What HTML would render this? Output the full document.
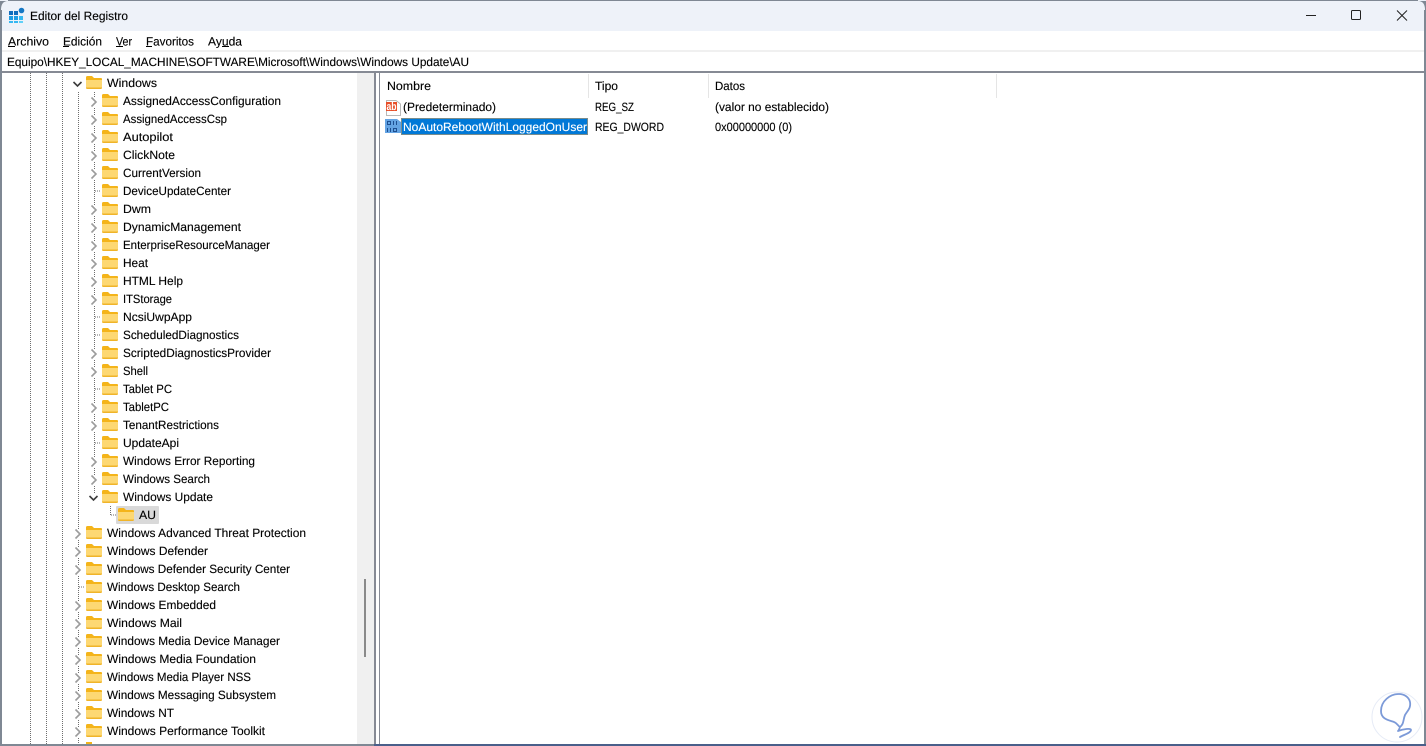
<!DOCTYPE html>
<html lang="es"><head><meta charset="utf-8"><title>Editor del Registro</title>
<style>
html,body{margin:0;padding:0;width:1426px;height:746px;overflow:hidden;background:#fff}
svg{display:block}
text{font-family:"Liberation Sans",Arial,sans-serif;font-size:12px;fill:#000;stroke:#000;stroke-width:.12}
</style></head><body>
<svg xmlns="http://www.w3.org/2000/svg" width="1426" height="746" viewBox="0 0 1426 746" text-rendering="geometricPrecision">
<defs>
<g id="f"><path d="M0 2.500Q0 1 1.500 1H6L8 3H15Q16 3 16 4V5H0Z" fill="#f4b41a"/><path d="M0 5H16V12.500Q16 14 14.500 14H1.500Q0 14 0 12.500Z" fill="#fdd873"/><path d="M0 12.500H16Q16 14 14.500 14H1.500Q0 14 0 12.500Z" fill="#f0b429"/></g>
<g id="c"><rect x="-5" y="-4" width="10" height="10" fill="#fff"/><path d="M-2.500-3.500 2 1-2.500 5.500" fill="none" stroke="#9c9c9c" stroke-width="1.600"/></g>
<g id="d"><rect x="-5" y="-4" width="10" height="10" fill="#fff"/><path d="M-4.500-1-.5 3 3.500-1" fill="none" stroke="#3c3c3c" stroke-width="1.600"/></g>
</defs>
<rect width="1426" height="746" fill="#fff"/>
<!-- title bar -->
<rect x="0" y="0" width="1426" height="31" fill="#eef2f9"/>
<path d="M0 10V1H8Q1 1 1 10ZM1426 10V1H1418Q1425 1 1425 10Z" fill="#7f8894"/>
<rect x="8" y="0" width="1410" height="1" fill="#7f8894"/>
<rect x="0" y="10" width="2" height="736" fill="#7f8894"/>
<rect x="1424" y="10" width="2" height="736" fill="#7f8894"/>
<!-- app icon -->
<g fill="#1e9ce3"><rect x="9" y="11" width="4" height="4" fill="#0f6cbd"/><rect x="14" y="11" width="4" height="4" fill="#0f6cbd"/><rect x="9" y="16" width="4" height="4"/><rect x="14" y="16" width="4" height="4"/><rect x="19" y="16" width="4" height="4" fill="#35b8f2"/><rect x="9" y="21" width="4" height="2" fill="#35b8f2"/><rect x="14" y="21" width="4" height="2" fill="#35b8f2"/><rect x="19" y="21" width="4" height="2" fill="#5fd0f8"/><circle cx="21.500" cy="10.500" r="2.800" fill="#1577c4"/></g>
<text x="30" y="20" textLength="98" lengthAdjust="spacingAndGlyphs">Editor del Registro</text>
<!-- window buttons -->
<rect x="1306" y="15" width="10" height="1" fill="#222"/>
<rect x="1351.500" y="10.500" width="9" height="9" rx="1" fill="none" stroke="#222"/>
<path d="M1397 10.500 1407 20.500M1407 10.500 1397 20.500" stroke="#222" fill="none"/>
<!-- menu -->
<rect x="2" y="31" width="1422" height="19" fill="#fff"/>
<text x="8" y="45.500" textLength="41" lengthAdjust="spacingAndGlyphs">Archivo</text>
<text x="63" y="45.500" textLength="39" lengthAdjust="spacingAndGlyphs">Edición</text>
<text x="116" y="45.500" textLength="16" lengthAdjust="spacingAndGlyphs">Ver</text>
<text x="146" y="45.500" textLength="48" lengthAdjust="spacingAndGlyphs">Favoritos</text>
<text x="208" y="45.500" textLength="34" lengthAdjust="spacingAndGlyphs">Ayuda</text>
<g fill="#000"><rect x="8" y="46" width="7" height="1"/><rect x="63" y="46" width="6" height="1"/><rect x="116" y="46" width="7" height="1"/><rect x="146" y="46" width="6" height="1"/><rect x="222" y="46" width="7" height="1"/></g>
<!-- address -->
<rect x="2" y="50" width="1422" height="2" fill="#f0f0f0"/>
<rect x="2" y="52" width="1422" height="19" fill="#fff"/>
<text x="7" y="66" textLength="462" lengthAdjust="spacingAndGlyphs">Equipo\HKEY_LOCAL_MACHINE\SOFTWARE\Microsoft\Windows\Windows Update\AU</text>
<rect x="2" y="71" width="1422" height="2" fill="#868a94"/>
<!-- tree guides -->
<g stroke="#6e6e6e" stroke-dasharray="1 1" fill="none">
<path d="M30.500 73V744M46.500 73V744M62.500 73V744M78.500 92V744M94.500 92V497M110.500 506V515M79 587H85M95 191H101M95 317H101M95 335H101M95 389H101M95 443H101M111 515H117"/>
</g>
<!-- selection AU -->
<rect x="116" y="506" width="43" height="18" rx="1" fill="#d9d9d9"/>
<!-- chevrons -->
<use href="#d" x="78" y="83"/>
<g>
<use href="#c" x="94" y="101"/><use href="#c" x="94" y="119"/><use href="#c" x="94" y="137"/><use href="#c" x="94" y="155"/><use href="#c" x="94" y="173"/><use href="#c" x="94" y="209"/><use href="#c" x="94" y="227"/><use href="#c" x="94" y="245"/><use href="#c" x="94" y="263"/><use href="#c" x="94" y="281"/><use href="#c" x="94" y="299"/><use href="#c" x="94" y="353"/><use href="#c" x="94" y="371"/><use href="#c" x="94" y="407"/><use href="#c" x="94" y="425"/><use href="#c" x="94" y="461"/><use href="#c" x="94" y="479"/>
</g>
<use href="#d" x="94" y="497"/>
<g>
<use href="#c" x="78" y="533"/><use href="#c" x="78" y="551"/><use href="#c" x="78" y="569"/><use href="#c" x="78" y="605"/><use href="#c" x="78" y="623"/><use href="#c" x="78" y="641"/><use href="#c" x="78" y="659"/><use href="#c" x="78" y="677"/><use href="#c" x="78" y="695"/><use href="#c" x="78" y="713"/><use href="#c" x="78" y="731"/>
</g>
<!-- folders -->
<use href="#f" x="86" y="75"/>
<use href="#f" x="102" y="93"/><use href="#f" x="102" y="111"/><use href="#f" x="102" y="129"/><use href="#f" x="102" y="147"/><use href="#f" x="102" y="165"/><use href="#f" x="102" y="183"/><use href="#f" x="102" y="201"/><use href="#f" x="102" y="219"/><use href="#f" x="102" y="237"/><use href="#f" x="102" y="255"/><use href="#f" x="102" y="273"/><use href="#f" x="102" y="291"/><use href="#f" x="102" y="309"/><use href="#f" x="102" y="327"/><use href="#f" x="102" y="345"/><use href="#f" x="102" y="363"/><use href="#f" x="102" y="381"/><use href="#f" x="102" y="399"/><use href="#f" x="102" y="417"/><use href="#f" x="102" y="435"/><use href="#f" x="102" y="453"/><use href="#f" x="102" y="471"/><use href="#f" x="102" y="489"/>
<use href="#f" x="118" y="507"/>
<use href="#f" x="86" y="525"/><use href="#f" x="86" y="543"/><use href="#f" x="86" y="561"/><use href="#f" x="86" y="579"/><use href="#f" x="86" y="597"/><use href="#f" x="86" y="615"/><use href="#f" x="86" y="633"/><use href="#f" x="86" y="651"/><use href="#f" x="86" y="669"/><use href="#f" x="86" y="687"/><use href="#f" x="86" y="705"/><use href="#f" x="86" y="723"/>
<rect x="86" y="742" width="6" height="2" fill="#f4b41a"/>
<!-- tree labels -->
<text x="107" y="87" textLength="50" lengthAdjust="spacingAndGlyphs">Windows</text>
<text x="123" y="105" textLength="158" lengthAdjust="spacingAndGlyphs">AssignedAccessConfiguration</text>
<text x="123" y="123" textLength="104" lengthAdjust="spacingAndGlyphs">AssignedAccessCsp</text>
<text x="123" y="141" textLength="50" lengthAdjust="spacingAndGlyphs">Autopilot</text>
<text x="123" y="159" textLength="52" lengthAdjust="spacingAndGlyphs">ClickNote</text>
<text x="123" y="177" textLength="78" lengthAdjust="spacingAndGlyphs">CurrentVersion</text>
<text x="123" y="195" textLength="108" lengthAdjust="spacingAndGlyphs">DeviceUpdateCenter</text>
<text x="123" y="213" textLength="28" lengthAdjust="spacingAndGlyphs">Dwm</text>
<text x="123" y="231" textLength="118" lengthAdjust="spacingAndGlyphs">DynamicManagement</text>
<text x="123" y="249" textLength="147" lengthAdjust="spacingAndGlyphs">EnterpriseResourceManager</text>
<text x="123" y="267" textLength="25" lengthAdjust="spacingAndGlyphs">Heat</text>
<text x="123" y="285" textLength="60" lengthAdjust="spacingAndGlyphs">HTML Help</text>
<text x="123" y="303" textLength="49" lengthAdjust="spacingAndGlyphs">ITStorage</text>
<text x="123" y="321" textLength="69" lengthAdjust="spacingAndGlyphs">NcsiUwpApp</text>
<text x="123" y="339" textLength="116" lengthAdjust="spacingAndGlyphs">ScheduledDiagnostics</text>
<text x="123" y="357" textLength="148" lengthAdjust="spacingAndGlyphs">ScriptedDiagnosticsProvider</text>
<text x="123" y="375" textLength="25" lengthAdjust="spacingAndGlyphs">Shell</text>
<text x="123" y="393" textLength="49" lengthAdjust="spacingAndGlyphs">Tablet PC</text>
<text x="123" y="411" textLength="46" lengthAdjust="spacingAndGlyphs">TabletPC</text>
<text x="123" y="429" textLength="96" lengthAdjust="spacingAndGlyphs">TenantRestrictions</text>
<text x="123" y="447" textLength="56" lengthAdjust="spacingAndGlyphs">UpdateApi</text>
<text x="123" y="465" textLength="132" lengthAdjust="spacingAndGlyphs">Windows Error Reporting</text>
<text x="123" y="483" textLength="87" lengthAdjust="spacingAndGlyphs">Windows Search</text>
<text x="123" y="501" textLength="90" lengthAdjust="spacingAndGlyphs">Windows Update</text>
<text x="139" y="519" textLength="17" lengthAdjust="spacingAndGlyphs">AU</text>
<text x="107" y="537" textLength="199" lengthAdjust="spacingAndGlyphs">Windows Advanced Threat Protection</text>
<text x="107" y="555" textLength="101" lengthAdjust="spacingAndGlyphs">Windows Defender</text>
<text x="107" y="573" textLength="183" lengthAdjust="spacingAndGlyphs">Windows Defender Security Center</text>
<text x="107" y="591" textLength="133" lengthAdjust="spacingAndGlyphs">Windows Desktop Search</text>
<text x="107" y="609" textLength="109" lengthAdjust="spacingAndGlyphs">Windows Embedded</text>
<text x="107" y="627" textLength="75" lengthAdjust="spacingAndGlyphs">Windows Mail</text>
<text x="107" y="645" textLength="173" lengthAdjust="spacingAndGlyphs">Windows Media Device Manager</text>
<text x="107" y="663" textLength="149" lengthAdjust="spacingAndGlyphs">Windows Media Foundation</text>
<text x="107" y="681" textLength="144" lengthAdjust="spacingAndGlyphs">Windows Media Player NSS</text>
<text x="107" y="699" textLength="169" lengthAdjust="spacingAndGlyphs">Windows Messaging Subsystem</text>
<text x="107" y="717" textLength="67" lengthAdjust="spacingAndGlyphs">Windows NT</text>
<text x="107" y="735" textLength="158" lengthAdjust="spacingAndGlyphs">Windows Performance Toolkit</text>
<!-- scrollbar -->
<rect x="357" y="73" width="17" height="671" fill="#f0f0f0"/>
<rect x="364" y="579" width="2" height="78" fill="#8a8a8a"/>
<!-- splitter -->
<rect x="374" y="73" width="2" height="671" fill="#868a94"/>
<rect x="379" y="73" width="1" height="671" fill="#868a94"/>
<!-- list header -->
<text x="387" y="90" textLength="44" lengthAdjust="spacingAndGlyphs">Nombre</text>
<text x="595" y="90" textLength="23" lengthAdjust="spacingAndGlyphs">Tipo</text>
<text x="715" y="90" textLength="30" lengthAdjust="spacingAndGlyphs">Datos</text>
<g fill="#e5e5e5"><rect x="588" y="74" width="1" height="24"/><rect x="708" y="74" width="1" height="24"/><rect x="996" y="74" width="1" height="24"/></g>
<!-- list rows -->
<path d="M386.500 100.500H396L400.500 104V115.500H386.500Z" fill="#fff" stroke="#b9b9b9"/>
<rect x="386" y="102" width="11" height="9" fill="#e8502a"/>
<text x="386.500" y="110" style="font-size:11px;font-weight:bold;fill:#fff;stroke:none" textLength="10" lengthAdjust="spacingAndGlyphs">ab</text>
<text x="403" y="111" textLength="93" lengthAdjust="spacingAndGlyphs">(Predeterminado)</text>
<text x="595" y="111" textLength="39" lengthAdjust="spacingAndGlyphs">REG_SZ</text>
<text x="715" y="111" textLength="114" lengthAdjust="spacingAndGlyphs">(valor no establecido)</text>
<path d="M385 119H397L401 122V133H385Z" fill="#64a4e4"/>
<g fill="none" stroke="#1d4f91"><rect x="387.500" y="121.500" width="3" height="3"/><path d="M393.500 121V125M396.500 121V125M387.500 128V132M390.500 128V132"/><rect x="393.500" y="128.500" width="3" height="3"/></g>
<rect x="401" y="118" width="187" height="17" fill="#0078d7"/>
<rect x="401.500" y="118.500" width="186" height="16" fill="none" stroke="#f0a040" stroke-dasharray="1 1"/>
<text x="403" y="131" textLength="184" lengthAdjust="spacingAndGlyphs" style="fill:#fff;stroke:#fff">NoAutoRebootWithLoggedOnUser</text>
<text x="595" y="131" textLength="69" lengthAdjust="spacingAndGlyphs">REG_DWORD</text>
<text x="715" y="131" textLength="77" lengthAdjust="spacingAndGlyphs">0x00000000 (0)</text>
<!-- bottom border -->
<rect x="0" y="744" width="1426" height="2" fill="#4a5f8a"/>
<rect x="0" y="744" width="374" height="2" fill="#7f8894"/>
<!-- watermark -->
<circle cx="1397" cy="717" r="25" fill="#fff" stroke="#e6ebf6" stroke-width="1"/>
<path d="M1399 694C1390 694 1381 701 1381 711C1381 719 1388 720 1394 722C1397 723 1398 726 1400 727C1404 724 1403 720 1405 715C1408 710 1411 708 1410 702C1409 697 1404 694 1399 694ZM1400 727C1399 730 1398 731 1398 731C1403 729 1411 728 1411 730C1411 733 1403 735 1400 737" fill="none" stroke="#7c9ad8" stroke-width="1.800" stroke-linecap="round" stroke-linejoin="round"/>
</svg>
</body></html>
